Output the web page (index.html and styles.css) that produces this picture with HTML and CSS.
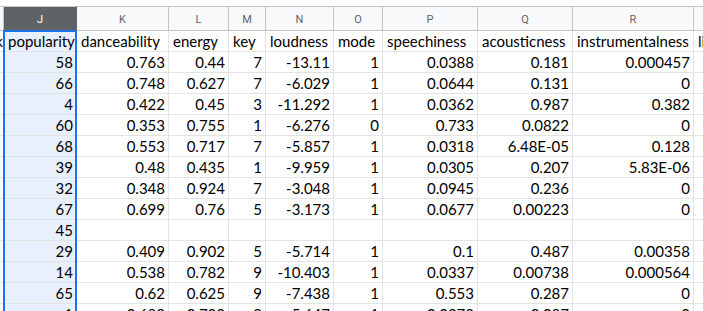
FILE: index.html
```html
<!DOCTYPE html>
<html>
<head>
<meta charset="utf-8">
<link rel="stylesheet" href="styles.css">
</head>
<body>
<div class="sheet">
  <div class="grid">
    <div class="ch"></div><div class="ch sel">J</div><div class="ch">K</div><div class="ch">L</div><div class="ch">M</div><div class="ch">N</div><div class="ch">O</div><div class="ch">P</div><div class="ch">Q</div><div class="ch">R</div><div class="ch"></div>

    <div class="c clip">track</div><div class="c t j">popularity</div><div class="c t">danceability</div><div class="c t">energy</div><div class="c t">key</div><div class="c t">loudness</div><div class="c t">mode</div><div class="c t">speechiness</div><div class="c t">acousticness</div><div class="c t">instrumentalness</div><div class="c t">liveness</div>

    <div class="c"></div><div class="c j">58</div><div class="c">0.763</div><div class="c">0.44</div><div class="c">7</div><div class="c">-13.11</div><div class="c">1</div><div class="c">0.0388</div><div class="c">0.181</div><div class="c">0.000457</div><div class="c"></div>
    <div class="c"></div><div class="c j">66</div><div class="c">0.748</div><div class="c">0.627</div><div class="c">7</div><div class="c">-6.029</div><div class="c">1</div><div class="c">0.0644</div><div class="c">0.131</div><div class="c">0</div><div class="c"></div>
    <div class="c"></div><div class="c j">4</div><div class="c">0.422</div><div class="c">0.45</div><div class="c">3</div><div class="c">-11.292</div><div class="c">1</div><div class="c">0.0362</div><div class="c">0.987</div><div class="c">0.382</div><div class="c"></div>
    <div class="c"></div><div class="c j">60</div><div class="c">0.353</div><div class="c">0.755</div><div class="c">1</div><div class="c">-6.276</div><div class="c">0</div><div class="c">0.733</div><div class="c">0.0822</div><div class="c">0</div><div class="c"></div>
    <div class="c"></div><div class="c j">68</div><div class="c">0.553</div><div class="c">0.717</div><div class="c">7</div><div class="c">-5.857</div><div class="c">1</div><div class="c">0.0318</div><div class="c">6.48E-05</div><div class="c">0.128</div><div class="c"></div>
    <div class="c"></div><div class="c j">39</div><div class="c">0.48</div><div class="c">0.435</div><div class="c">1</div><div class="c">-9.959</div><div class="c">1</div><div class="c">0.0305</div><div class="c">0.207</div><div class="c">5.83E-06</div><div class="c"></div>
    <div class="c"></div><div class="c j">32</div><div class="c">0.348</div><div class="c">0.924</div><div class="c">7</div><div class="c">-3.048</div><div class="c">1</div><div class="c">0.0945</div><div class="c">0.236</div><div class="c">0</div><div class="c"></div>
    <div class="c"></div><div class="c j">67</div><div class="c">0.699</div><div class="c">0.76</div><div class="c">5</div><div class="c">-3.173</div><div class="c">1</div><div class="c">0.0677</div><div class="c">0.00223</div><div class="c">0</div><div class="c"></div>
    <div class="c"></div><div class="c j">45</div><div class="c"></div><div class="c"></div><div class="c"></div><div class="c"></div><div class="c"></div><div class="c"></div><div class="c"></div><div class="c"></div><div class="c"></div>
    <div class="c"></div><div class="c j">29</div><div class="c">0.409</div><div class="c">0.902</div><div class="c">5</div><div class="c">-5.714</div><div class="c">1</div><div class="c">0.1</div><div class="c">0.487</div><div class="c">0.00358</div><div class="c"></div>
    <div class="c"></div><div class="c j">14</div><div class="c">0.538</div><div class="c">0.782</div><div class="c">9</div><div class="c">-10.403</div><div class="c">1</div><div class="c">0.0337</div><div class="c">0.00738</div><div class="c">0.000564</div><div class="c"></div>
    <div class="c"></div><div class="c j">65</div><div class="c">0.62</div><div class="c">0.625</div><div class="c">9</div><div class="c">-7.438</div><div class="c">1</div><div class="c">0.553</div><div class="c">0.287</div><div class="c">0</div><div class="c"></div>
    <div class="c"></div><div class="c j">1</div><div class="c">0.683</div><div class="c">0.733</div><div class="c">9</div><div class="c">-5.647</div><div class="c">1</div><div class="c">0.0273</div><div class="c">0.087</div><div class="c">0</div><div class="c"></div>
  </div>
  <div class="selection"></div>
</div>
</body>
</html>
```
FILE: styles.css
```css
html, body {
  margin: 0;
  padding: 0;
  background: #ffffff;
  overflow: hidden;
}
.sheet {
  position: relative;
  padding-top: 6px;
  width: 703px;
  height: 311px;
  overflow: hidden;
  box-sizing: border-box;
}
.grid {
  display: grid;
  grid-template-columns: 4px 73px 92px 60px 37px 68px 49px 95px 95px 121px 100px;
  grid-auto-rows: 21px;
  grid-template-rows: 25px;
  width: 794px;
  font-family: "Lato", "Open Sans", sans-serif;
  font-size: 15px;
  color: #000;
}
.ch {
  box-sizing: border-box;
  border-top: 1px solid #c4c7c5;
  border-right: 1px solid #c4c7c5;
  border-bottom: 1px solid #c4c7c5;
  background: #f8f9fa;
  color: #5f6368;
  font-family: "Roboto", "Liberation Sans", sans-serif;
  font-size: 11px;
  display: flex;
  align-items: center;
  justify-content: center;
  padding-top: 1px;
}
.ch.sel {
  background: #5f6368;
  color: #ffffff;
  border-right-color: #5f6368;
}
.c {
  box-sizing: border-box;
  border-right: 1px solid #e2e3e3;
  border-bottom: 1px solid #e2e3e3;
  text-align: right;
  padding: 0 3px 0 3px;
  line-height: 20px;
  white-space: nowrap;
  overflow: hidden;
}
.c.t {
  text-align: left;
  padding-left: 4px;
}
.c.j {
  background: #e8f0fe;
}
.c.clip {
  padding: 0;
  direction: rtl;
  text-align: right;
}
.selection {
  position: absolute;
  left: 3px;
  top: 30px;
  width: 74px;
  height: 300px;
  box-sizing: border-box;
  border: 2px solid #1a73e8;
}
```
